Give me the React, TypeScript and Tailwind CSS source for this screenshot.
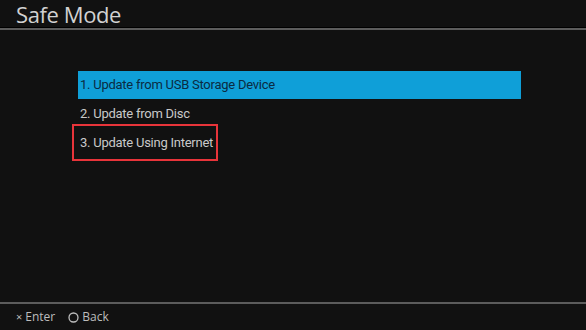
const items = [
  "1. Update from USB Storage Device",
  "2. Update from Disc",
  "3. Update Using Internet",
];

export default function App() {
  return (
    <div
      className="w-[586px] h-[330px] bg-[#111111] flex flex-col overflow-hidden"
      style={{ fontFamily: '"Open Sans", "Noto Sans", sans-serif' }}
    >
      <header className="h-[30px] shrink-0 border-b-2 border-[#5c5c5c] shadow-[inset_0_-1px_0_#000]">
        <h1 className="pl-[16px] text-[22px] leading-[28px] text-[#d2d2d2] tracking-[-0.4px]">
          Safe Mode
        </h1>
      </header>

      <main className="flex-1 pt-[41px] pl-[78px] font-['Roboto',sans-serif] tracking-[-0.25px]">
        <ul className="w-[443px] flex flex-col">
          {items.map((label, i) => (
            <li
              key={label}
              className={
                i === 0
                  ? "h-[28px] flex items-center pl-[2px] bg-[#0f9fd8] text-[#0b2b42] text-[13px]"
                  : "h-[29px] flex items-center pl-[2px] text-[#c9c9c9] text-[13px]"
              }
            >
              {i === 2 ? (
                <span className="-ml-[8px] pl-[6px] pr-[3px] h-[37px] flex items-center border-2 border-[#e8343a]">
                  {label}
                </span>
              ) : (
                label
              )}
            </li>
          ))}
        </ul>
      </main>

      <footer className="h-[28px] shrink-0 border-t-2 border-[#5c5c5c] flex items-center pl-[16px] gap-[13px] text-[12px] text-[#bdbdbd]">
        <span className="flex items-center gap-[3px]">
          <span className="text-[11px]">×</span>
          Enter
        </span>
        <span className="flex items-center gap-[3px]">
          <svg width="11" height="11" viewBox="0 0 11 11">
            <circle cx="5.5" cy="5.5" r="4.5" fill="none" stroke="#bdbdbd" strokeWidth="1.3" />
          </svg>
          Back
        </span>
      </footer>
    </div>
  );
}
